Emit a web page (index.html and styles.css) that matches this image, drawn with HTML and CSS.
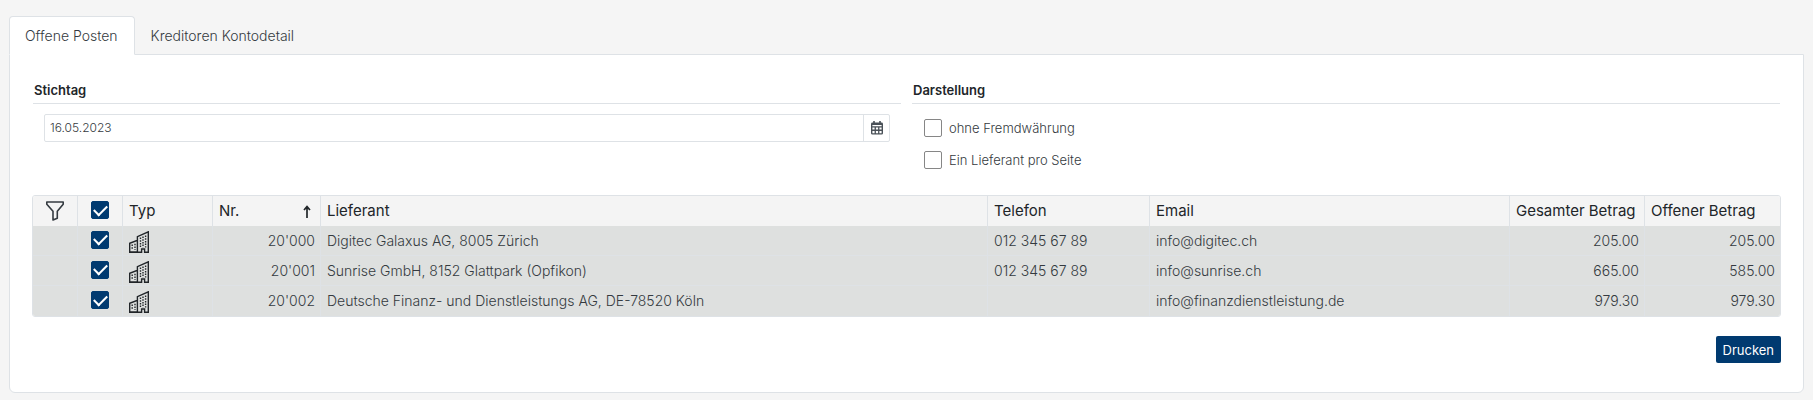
FILE: index.html
```html
<!DOCTYPE html>
<html lang="de">
<head>
<meta charset="utf-8">
<meta name="viewport" content="width=device-width, initial-scale=1">
<title>Offene Posten</title>
<link rel="stylesheet" href="styles.css">
</head>
<body>
<svg class="sprite" aria-hidden="true">
  <symbol id="building" viewBox="0 0 20 22">
    <path d="M.7 21.2V12.3L8.4 9.3V21.2ZM8.4 21.2V5.6L19.3 .8V21.2H15.6V18H12.6V21.2Z" fill="none" stroke="#212529" stroke-width="1.4"/>
    <path d="M.4 21.2H8.8" stroke="#212529" stroke-width="1.5"/>
    <path d="M11.5 6.5V16.5M14 5.5V16.5M16.6 4.5V16.5M3.2 13.5V19M6 12.8V19" fill="none" stroke="#212529" stroke-width="1.4" stroke-dasharray="1.5 1.2"/>
  </symbol>
</svg>
<nav class="tabs" role="tablist">
  <button class="tab tab-active" role="tab" aria-selected="true">Offene Posten</button>
  <button class="tab" role="tab" aria-selected="false">Kreditoren Kontodetail</button>
</nav>
<main class="panel">
  <div class="filters">
    <section class="group">
      <h2 class="legend"><label for="date">Stichtag</label></h2>
      <div class="datepicker">
        <input class="date-input" id="date" type="text" value="16.05.2023">
        <button class="date-button" aria-label="Kalender">
          <svg width="12" height="14" viewBox="0 0 12 14"><path d="M3 0V3M9 0V3" stroke="#495057" stroke-width="1.6"/><path fill="#495057" fill-rule="evenodd" d="M1.5 1.6H10.5Q12 1.6 12 3V12.2Q12 13.6 10.5 13.6H1.5Q0 13.6 0 12.2V3Q0 1.6 1.5 1.6ZM1.4 4V5.2H10.6V4ZM1.4 6.6V8.6H3.6V6.6ZM4.9 6.6V8.6H7.1V6.6ZM8.4 6.6V8.6H10.6V6.6ZM1.4 10V12.2H3.6V10ZM4.9 10V12.2H7.1V10ZM8.4 10V12.2H10.6V10Z"/></svg>
        </button>
      </div>
    </section>
    <section class="group">
      <h2 class="legend">Darstellung</h2>
      <div class="options">
        <label class="option"><input class="check" type="checkbox">ohne Fremdwährung</label>
        <label class="option"><input class="check" type="checkbox">Ein Lieferant pro Seite</label>
      </div>
    </section>
  </div>
  <table class="grid">
    <colgroup><col class="c-tool"><col class="c-tool"><col class="c-type"><col class="c-nr"><col><col class="c-phone"><col class="c-mail"><col class="c-amount"><col class="c-amount"></colgroup>
    <thead>
      <tr>
        <th class="center"><button class="filter" aria-label="Filter"><svg width="18" height="20" viewBox="0 0 18 20"><path d="M.8 1H17.2V3.2L11.3 10.3V17.2L7 19V10.3L.8 3.2Z" fill="none" stroke="#343a40" stroke-width="1.6" stroke-linejoin="round"/></svg></button></th>
        <th class="center"><input class="check" type="checkbox" aria-label="Alle auswählen" checked></th>
        <th>Typ</th>
        <th><div class="sorted">Nr.<svg width="8" height="13" viewBox="0 0 8 13"><path d="M4 13V2M1 5L4 1.6L7 5" fill="none" stroke="#212529" stroke-width="1.7"/></svg></div></th>
        <th>Lieferant</th><th>Telefon</th><th>Email</th><th>Gesamter Betrag</th><th>Offener Betrag</th>
      </tr>
    </thead>
    <tbody>
      <tr><td></td><td class="center"><input class="check" type="checkbox" aria-label="20'000 auswählen" checked></td><td><svg class="building"><use href="#building"/></svg></td><td class="num">20'000</td><td>Digitec Galaxus AG, 8005 Zürich</td><td>012 345 67 89</td><td>info@digitec.ch</td><td class="num">205.00</td><td class="num">205.00</td></tr>
      <tr><td></td><td class="center"><input class="check" type="checkbox" aria-label="20'001 auswählen" checked></td><td><svg class="building"><use href="#building"/></svg></td><td class="num">20'001</td><td>Sunrise GmbH, 8152 Glattpark (Opfikon)</td><td>012 345 67 89</td><td>info@sunrise.ch</td><td class="num">665.00</td><td class="num">585.00</td></tr>
      <tr><td></td><td class="center"><input class="check" type="checkbox" aria-label="20'002 auswählen" checked></td><td><svg class="building"><use href="#building"/></svg></td><td class="num">20'002</td><td>Deutsche Finanz- und Dienstleistungs AG, DE-78520 Köln</td><td></td><td>info@finanzdienstleistung.de</td><td class="num">979.30</td><td class="num">979.30</td></tr>
    </tbody>
  </table>
  <div class="actions"><button class="print">Drucken</button></div>
</main>
</body>
</html>
```
FILE: styles.css
```css
* { box-sizing: border-box; }
body {
  margin: 0;
  padding: 16px 9px 7px;
  background: #f5f5f5;
  color: #343a40;
  font: 300 14px/20px Inter, "Open Sans", sans-serif;
}
button, input { font: inherit; color: inherit; margin: 0; }
.sprite { display: none; }

.tabs { display: flex; }
.tab {
  height: 39px;
  padding: 0 15px;
  border: 1px solid transparent;
  background: none;
}
.tab-active {
  position: relative;
  z-index: 1;
  padding: 0 16px 0 15px;
  border-color: #dee2e6;
  border-bottom-color: #fff;
  border-radius: 4px 4px 0 0;
  background: #fff;
}
.panel {
  margin-top: -1px;
  padding: 24px 22px 29px;
  border: 1px solid #dee2e6;
  border-radius: 0 0 6px 6px;
  background: #fff;
}

.filters {
  display: grid;
  grid-template-columns: 1fr 1fr;
  gap: 11px;
  padding: 0 1px;
}
.legend {
  margin: 0;
  padding: 1px 1px 3px;
  border-bottom: 1px solid #dee2e6;
  color: #212529;
  font-size: 13px;
  font-weight: 600;
}
.datepicker {
  display: flex;
  height: 28px;
  margin: 10px 11px 0;
  border: 1px solid #dee2e6;
  border-radius: 2px;
}
.date-input {
  flex: 1;
  min-width: 0;
  padding: 0 5px;
  border: 0;
  background: none;
  font-size: 12px;
}
.date-button {
  display: grid;
  place-items: center;
  width: 26px;
  padding: 0;
  border: 0;
  border-left: 1px solid #dee2e6;
  background: none;
}
.options {
  display: grid;
  gap: 12px;
  padding: 14px 12px 0;
}
.option {
  display: flex;
  align-items: center;
  gap: 7px;
  font-size: 13px;
}
.check {
  appearance: none;
  display: grid;
  place-items: center;
  width: 18px;
  height: 18px;
  border: 1px solid #868686;
  border-radius: 2px;
  background: #fff;
}
.check:checked { border-color: #003a70; background: #003a70; }
.check:checked::before {
  content: "";
  width: 11px;
  height: 6px;
  margin-bottom: 3px;
  border: solid #fff;
  border-width: 0 0 2px 2px;
  rotate: -45deg;
}

.grid {
  width: 100%;
  margin-top: 25px;
  border: 1px solid #dee2e6;
  border-radius: 3px;
  border-spacing: 0;
  table-layout: fixed;
  overflow: hidden;
}
.c-tool { width: 45px; }
.c-type { width: 90px; }
.c-nr { width: 108px; }
.c-phone { width: 162px; }
.c-mail { width: 360px; }
.c-amount { width: 135px; }
.grid th, .grid td {
  height: 30px;
  padding: 0 6px;
  border-right: 1px solid #dee2e6;
  text-align: left;
  white-space: nowrap;
}
.grid th { background: #f4f4f4; color: #212529; font-size: 15px; font-weight: 400; }
.grid td { background: #dee0df; border-bottom: 1px solid #dee2e6; }
.grid th:last-child, .grid td:last-child { border-right: 0; }
.grid tr:last-child td { border-bottom: 0; }
.grid .num { padding-right: 5px; text-align: right; }
.grid .center { padding: 0; }
.center .check { margin: 0 auto 2px; }
.filter { display: grid; margin: 0 auto; padding: 0; border: 0; background: none; }
.sorted { display: flex; align-items: center; justify-content: space-between; padding-right: 3px; }
.building { display: block; width: 20px; height: 22px; margin-top: 2px; }

.actions { display: flex; justify-content: flex-end; padding: 19px 0 0; }
.print {
  height: 27px;
  padding: 0 7px;
  border: 0;
  border-radius: 2px;
  background: #003a70;
  color: #fff;
  font-size: 13px;
  font-weight: 400;
}
```
